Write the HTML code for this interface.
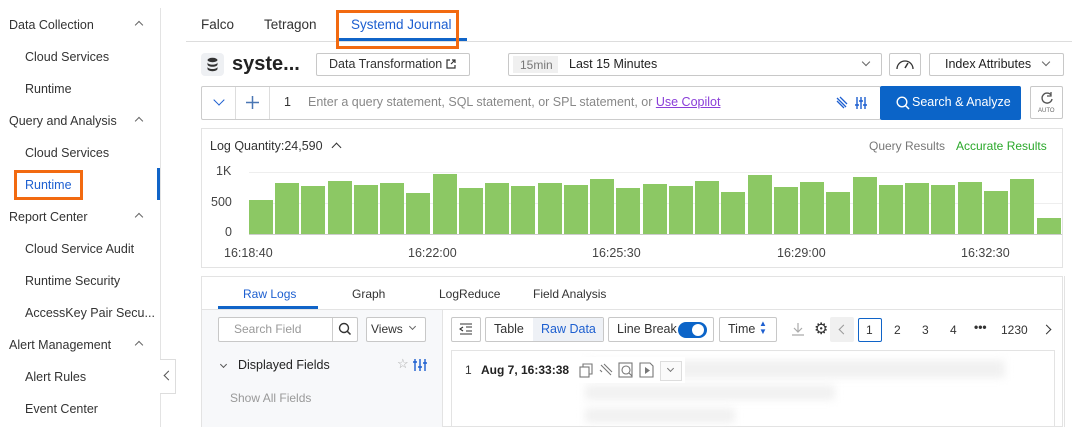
<!DOCTYPE html>
<html><head><meta charset="utf-8">
<style>
*{box-sizing:border-box;margin:0;padding:0}
body{width:1072px;height:427px;overflow:hidden;background:#fff;font-family:"Liberation Sans",sans-serif;font-size:12px;color:#333;position:relative}
.a{position:absolute;white-space:nowrap}
.h{font-size:12.5px;color:#333}
.s{font-size:12.5px;color:#333}
.btn{position:absolute;border:1px solid #c8c8c8;border-radius:2px;background:#fff}
.bar{position:absolute;background:#8cc864;width:24px}
.car{position:absolute;width:6px;height:6px;border-left:1.3px solid #666;border-top:1.3px solid #666;transform:rotate(45deg)}
.gl{position:absolute;left:249px;width:813px;height:1px;background:#eee}
.blur{position:absolute;background:#f1f1f1;filter:blur(4px);border-radius:3px}
</style></head><body>
<!-- sidebar -->
<div class="a h" style="left:9px;top:18px">Data Collection</div>
<div class="car" style="left:136px;top:22px"></div>
<div class="a s" style="left:25px;top:50px">Cloud Services</div>
<div class="a s" style="left:25px;top:82px">Runtime</div>
<div class="a h" style="left:9px;top:114px">Query and Analysis</div>
<div class="car" style="left:136px;top:118px"></div>
<div class="a s" style="left:25px;top:146px">Cloud Services</div>
<div class="a s" style="left:25px;top:178px;color:#1d5fd0">Runtime</div>
<div class="a" style="left:14px;top:170px;width:69px;height:30px;border:3px solid #f26a10"></div>
<div class="a h" style="left:9px;top:210px">Report Center</div>
<div class="car" style="left:136px;top:214px"></div>
<div class="a s" style="left:25px;top:242px">Cloud Service Audit</div>
<div class="a s" style="left:25px;top:274px">Runtime Security</div>
<div class="a s" style="left:25px;top:306px">AccessKey Pair Secu...</div>
<div class="a h" style="left:9px;top:338px">Alert Management</div>
<div class="car" style="left:136px;top:342px"></div>
<div class="a s" style="left:25px;top:370px">Alert Rules</div>
<div class="a s" style="left:25px;top:402px">Event Center</div>
<div class="a" style="left:160px;top:8px;width:1px;height:419px;background:#e3e3e3"></div>
<div class="a" style="left:157px;top:168px;width:3px;height:32px;background:#1064c8"></div>
<div class="a" style="left:160px;top:359px;width:16px;height:35px;background:#fff;border:1px solid #ddd;border-left:none"></div>
<div class="a" style="left:165px;top:372px;width:7px;height:7px;border-left:1.3px solid #555;border-bottom:1.3px solid #555;transform:rotate(45deg)"></div>

<!-- tabs -->
<div class="a" style="left:186px;top:41px;width:886px;height:1px;background:#ddd"></div>
<div class="a" style="left:201px;top:17px;font-size:13.5px">Falco</div>
<div class="a" style="left:264px;top:17px;font-size:13.5px">Tetragon</div>
<div class="a" style="left:351px;top:17px;font-size:13.5px;color:#1d5fd0">Systemd Journal</div>
<div class="a" style="left:338px;top:38px;width:129px;height:3px;background:#1064c8"></div>
<div class="a" style="left:336px;top:10px;width:123px;height:39px;border:3px solid #f26a10"></div>

<!-- row 2 -->
<div class="a" style="left:201px;top:53px;width:23px;height:23px;background:#eef0f3;border-radius:4px"></div>
<svg class="a" style="left:206px;top:57px" width="13" height="15" viewBox="0 0 13 15"><ellipse cx="6.5" cy="3" rx="5" ry="2.2" fill="#333"/><path d="M1.5 5.2c0 1.4 2.2 2.4 5 2.4s5-1 5-2.4v2.2c0 1.4-2.2 2.4-5 2.4s-5-1-5-2.4z M1.5 9.6c0 1.4 2.2 2.4 5 2.4s5-1 5-2.4v2.2c0 1.4-2.2 2.4-5 2.4s-5-1-5-2.4z" fill="#333"/></svg>
<div class="a" style="left:232px;top:53px;font-size:20px;font-weight:bold;color:#222">syste...</div>
<div class="btn" style="left:316px;top:53px;width:154px;height:23px"></div>
<div class="a" style="left:329px;top:57px;font-size:12.5px">Data Transformation</div>
<svg class="a" style="left:445px;top:58px" width="12" height="12"><path d="M5 2H2v8h8V7 M7 2h3v3 M10 2 6 6" fill="none" stroke="#333" stroke-width="1.2"/></svg>
<div class="btn" style="left:508px;top:53px;width:374px;height:23px"></div>
<div class="a" style="left:513px;top:56px;width:45px;height:17px;background:#f0f0f0"></div>
<div class="a" style="left:520px;top:58px;color:#777;font-size:12px">15min</div>
<div class="a" style="left:569px;top:57px;font-size:12.5px;color:#222">Last 15 Minutes</div>
<div class="a" style="left:863px;top:59px;width:6px;height:6px;border-right:1.2px solid #666;border-bottom:1.2px solid #666;transform:rotate(45deg)"></div>
<div class="btn" style="left:889px;top:53px;width:32px;height:23px"></div>
<svg class="a" style="left:895px;top:57px" width="20" height="14"><path d="M2 12A8 8 0 0 1 18 12" fill="none" stroke="#333" stroke-width="1.3"/><path d="M10 11 13 6" stroke="#333" stroke-width="1.5"/></svg>
<div class="btn" style="left:929px;top:53px;width:135px;height:23px"></div>
<div class="a" style="left:945px;top:57px;font-size:12.5px;color:#222">Index Attributes</div>
<div class="a" style="left:1043px;top:59px;width:6px;height:6px;border-right:1.2px solid #666;border-bottom:1.2px solid #666;transform:rotate(45deg)"></div>

<!-- query row -->
<div class="btn" style="left:201px;top:86px;width:680px;height:34px;border-color:#ccc"></div>
<div class="a" style="left:235px;top:87px;width:1px;height:32px;background:#ddd"></div>
<div class="a" style="left:269px;top:87px;width:1px;height:32px;background:#ddd"></div>
<div class="a" style="left:215px;top:96px;width:8px;height:8px;border-right:1.6px solid #1d5fd0;border-bottom:1.6px solid #1d5fd0;transform:rotate(45deg)"></div>
<svg class="a" style="left:245px;top:95px" width="15" height="15"><path d="M7.5 1v13M1 7.5h13" stroke="#4a77b4" stroke-width="1.5"/></svg>
<div class="a" style="left:284px;top:95px;color:#333;font-size:12.5px">1</div>
<div class="a" style="left:308px;top:95px;color:#888;font-size:12.5px">Enter a query statement, SQL statement, or SPL statement, or <span style="color:#8a3ed8;text-decoration:underline">Use Copilot</span></div>
<svg class="a" style="left:835px;top:96px" width="34" height="14"><path d="M2 2l9 9M5 1l7 7M2 5l7 7" stroke="#1d5fd0" stroke-width="1.3" fill="none"/><path d="M22 1v12M26 1v12M30 1v12M20 9h4M24 5h4M28 9h4" stroke="#1d5fd0" stroke-width="1.4"/></svg>
<div class="a" style="left:880px;top:86px;width:141px;height:34px;background:#0b64c8;border-radius:2px"></div>
<svg class="a" style="left:896px;top:96px" width="14" height="14"><circle cx="6" cy="6" r="4.8" fill="none" stroke="#fff" stroke-width="1.4"/><path d="M9.5 9.5 13 13" stroke="#fff" stroke-width="1.5"/></svg>
<div class="a" style="left:912px;top:95px;color:#fff;font-size:12.5px">Search &amp; Analyze</div>
<div class="btn" style="left:1030px;top:86px;width:33px;height:33px"></div>
<svg class="a" style="left:1040px;top:91px" width="14" height="14"><path d="M11 4A5 5 0 1 0 12 8" fill="none" stroke="#555" stroke-width="1.4"/><path d="M11 1v4H7" fill="none" stroke="#555" stroke-width="1.3"/></svg>
<div class="a" style="left:1038px;top:108px;font-size:6px;color:#666">AUTO</div>

<!-- chart panel -->
<div class="a" style="left:201px;top:128px;width:862px;height:140px;border:1px solid #e3e3e3"></div>
<div class="a" style="left:210px;top:139px;font-size:12.5px;color:#333">Log Quantity:24,590</div>
<div class="a" style="left:333px;top:144px;width:7px;height:7px;border-left:1.4px solid #333;border-top:1.4px solid #333;transform:rotate(45deg)"></div>
<div class="a" style="left:869px;top:139px;color:#777;font-size:12px">Query Results</div>
<div class="a" style="left:956px;top:139px;color:#2aa82a;font-size:12px">Accurate Results</div>
<div class="a" style="left:216px;top:164px;color:#444;font-size:12.5px">1K</div>
<div class="a" style="left:211px;top:195px;color:#444;font-size:12.5px">500</div>
<div class="a" style="left:225px;top:225px;color:#444;font-size:12.5px">0</div>
<div class="gl" style="top:172px"></div>
<div class="gl" style="top:203px"></div>
<div class="gl" style="top:234px;background:#ccc"></div>
<div class="bar" style="left:249px;top:200px;height:34px"></div>
<div class="bar" style="left:275px;top:183px;height:51px"></div>
<div class="bar" style="left:301px;top:186px;height:48px"></div>
<div class="bar" style="left:328px;top:181px;height:53px"></div>
<div class="bar" style="left:354px;top:185px;height:49px"></div>
<div class="bar" style="left:380px;top:183px;height:51px"></div>
<div class="bar" style="left:406px;top:193px;height:41px"></div>
<div class="bar" style="left:433px;top:174px;height:60px"></div>
<div class="bar" style="left:459px;top:188px;height:46px"></div>
<div class="bar" style="left:485px;top:183px;height:51px"></div>
<div class="bar" style="left:511px;top:186px;height:48px"></div>
<div class="bar" style="left:538px;top:183px;height:51px"></div>
<div class="bar" style="left:564px;top:185px;height:49px"></div>
<div class="bar" style="left:590px;top:179px;height:55px"></div>
<div class="bar" style="left:616px;top:188px;height:46px"></div>
<div class="bar" style="left:643px;top:184px;height:50px"></div>
<div class="bar" style="left:669px;top:186px;height:48px"></div>
<div class="bar" style="left:695px;top:181px;height:53px"></div>
<div class="bar" style="left:721px;top:192px;height:42px"></div>
<div class="bar" style="left:748px;top:175px;height:59px"></div>
<div class="bar" style="left:774px;top:187px;height:47px"></div>
<div class="bar" style="left:800px;top:182px;height:52px"></div>
<div class="bar" style="left:826px;top:192px;height:42px"></div>
<div class="bar" style="left:853px;top:177px;height:57px"></div>
<div class="bar" style="left:879px;top:185px;height:49px"></div>
<div class="bar" style="left:905px;top:183px;height:51px"></div>
<div class="bar" style="left:931px;top:185px;height:49px"></div>
<div class="bar" style="left:958px;top:182px;height:52px"></div>
<div class="bar" style="left:984px;top:191px;height:43px"></div>
<div class="bar" style="left:1010px;top:179px;height:55px"></div>
<div class="bar" style="left:1037px;top:218px;height:16px"></div>
<div class="a" style="left:224px;top:246px;color:#444;font-size:12.5px">16:18:40</div>
<div class="a" style="left:408px;top:246px;color:#444;font-size:12.5px">16:22:00</div>
<div class="a" style="left:592px;top:246px;color:#444;font-size:12.5px">16:25:30</div>
<div class="a" style="left:777px;top:246px;color:#444;font-size:12.5px">16:29:00</div>
<div class="a" style="left:961px;top:246px;color:#444;font-size:12.5px">16:32:30</div>

<!-- lower panel -->
<div class="a" style="left:201px;top:276px;width:862px;height:151px;border:1px solid #e3e3e3"></div>
<div class="a" style="left:202px;top:309px;width:240px;height:118px;background:#f7f8fa"></div>
<div class="a" style="left:202px;top:309px;width:860px;height:1px;background:#e3e3e3"></div>
<div class="a" style="left:442px;top:309px;width:1px;height:118px;background:#e3e3e3"></div>
<div class="a" style="left:243px;top:287px;color:#1d5fd0;font-size:12px">Raw Logs</div>
<div class="a" style="left:218px;top:306px;width:100px;height:3px;background:#1064c8"></div>
<div class="a" style="left:352px;top:287px;color:#333;font-size:12px">Graph</div>
<div class="a" style="left:439px;top:287px;color:#333;font-size:12px">LogReduce</div>
<div class="a" style="left:533px;top:287px;color:#333;font-size:12px">Field Analysis</div>
<div class="btn" style="left:218px;top:317px;width:140px;height:25px"></div>
<div class="a" style="left:332px;top:318px;width:1px;height:23px;background:#ccc"></div>
<div class="a" style="left:234px;top:322px;color:#999;font-size:12px">Search Field</div>
<svg class="a" style="left:338px;top:322px" width="14" height="14"><circle cx="6" cy="6" r="4.5" fill="none" stroke="#333" stroke-width="1.4"/><path d="M9.3 9.3 12.5 12.5" stroke="#333" stroke-width="1.5"/></svg>
<div class="btn" style="left:366px;top:317px;width:60px;height:25px"></div>
<div class="a" style="left:371px;top:322px;color:#333;font-size:12px">Views</div>
<div class="a" style="left:410px;top:324px;width:5px;height:5px;border-right:1.1px solid #666;border-bottom:1.1px solid #666;transform:rotate(45deg)"></div>
<div class="a" style="left:221px;top:362px;width:5px;height:5px;border-right:1.1px solid #555;border-bottom:1.1px solid #555;transform:rotate(45deg)"></div>
<div class="a" style="left:238px;top:358px;color:#222;font-size:12.5px">Displayed Fields</div>
<div class="a" style="left:397px;top:356px;color:#aaa;font-size:13px">☆</div>
<svg class="a" style="left:413px;top:358px" width="14" height="13"><path d="M2 1v12M7 1v12M12 1v12M0 4h4M5 9h4M10 5h4" stroke="#1d5fd0" stroke-width="1.4"/></svg>
<div class="a" style="left:230px;top:391px;color:#999;font-size:12px">Show All Fields</div>

<div class="btn" style="left:451px;top:317px;width:30px;height:25px"></div>
<svg class="a" style="left:459px;top:323px" width="14" height="12"><path d="M1 1h12M7 4h6M7 8h6M1 11h12M4 4 1 6l3 2" stroke="#333" stroke-width="1.1" fill="none"/></svg>
<div class="btn" style="left:485px;top:317px;width:119px;height:25px"></div>
<div class="a" style="left:533px;top:318px;width:70px;height:23px;background:#eef1f6"></div>
<div class="a" style="left:494px;top:322px;font-size:12.5px;color:#333">Table</div>
<div class="a" style="left:541px;top:322px;font-size:12.5px;color:#1d5fd0">Raw Data</div>
<div class="btn" style="left:608px;top:317px;width:106px;height:25px"></div>
<div class="a" style="left:617px;top:322px;font-size:12.5px;color:#333">Line Break</div>
<div class="a" style="left:678px;top:322px;width:29px;height:16px;border-radius:8px;background:#0b64c8"></div>
<div class="a" style="left:692px;top:324px;width:12px;height:12px;border-radius:6px;background:#fff"></div>
<div class="btn" style="left:719px;top:317px;width:58px;height:25px"></div>
<div class="a" style="left:728px;top:322px;font-size:12.5px;color:#333">Time</div>
<div class="a" style="left:759px;top:320px;font-size:8px;color:#1d5fd0;line-height:8px">▲<br>▼</div>
<svg class="a" style="left:791px;top:322px" width="14" height="14"><path d="M7 1v9M3 6l4 4 4-4M1 13h12" stroke="#aaa" stroke-width="1.2" fill="none"/></svg>
<div class="a" style="left:814px;top:319px;font-size:16px;color:#333">⚙</div>
<div class="a" style="left:830px;top:317px;width:24px;height:25px;background:#f0f0f0;border-radius:2px"></div>
<div class="a" style="left:840px;top:326px;width:7px;height:7px;border-left:1.2px solid #999;border-bottom:1.2px solid #999;transform:rotate(45deg)"></div>
<div class="a" style="left:858px;top:318px;width:24px;height:24px;border:1px solid #1064c8;border-radius:2px"></div>
<div class="a" style="left:866px;top:323px;font-size:12px;color:#333">1</div>
<div class="a" style="left:894px;top:323px;font-size:12px;color:#333">2</div>
<div class="a" style="left:922px;top:323px;font-size:12px;color:#333">3</div>
<div class="a" style="left:950px;top:323px;font-size:12px;color:#333">4</div>
<div class="a" style="left:974px;top:320px;font-size:12px;color:#333;font-weight:bold">•••</div>
<div class="a" style="left:1001px;top:323px;font-size:12px;color:#333">1230</div>
<div class="a" style="left:1043px;top:326px;width:7px;height:7px;border-right:1.3px solid #333;border-top:1.3px solid #333;transform:rotate(45deg)"></div>

<div class="a" style="left:451px;top:350px;width:604px;height:77px;border:1px solid #e3e3e3;border-bottom:none"></div>
<div class="blur" style="left:585px;top:360px;width:420px;height:18px"></div>
<div class="blur" style="left:585px;top:385px;width:250px;height:15px"></div>
<div class="blur" style="left:585px;top:408px;width:150px;height:15px"></div>
<div class="a" style="left:465px;top:363px;font-size:12px;color:#333">1</div>
<div class="a" style="left:481px;top:363px;font-size:12px;color:#222;font-weight:bold">Aug 7, 16:33:38</div>
<div class="a" style="left:576px;top:357px;width:109px;height:26px;background:#fff"></div>
<svg class="a" style="left:579px;top:362px" width="90" height="16"><g fill="none" stroke="#777" stroke-width="1.1"><rect x="1" y="5" width="9" height="10"/><path d="M4 5V2h9v10h-3"/><path d="M22 3l10 10M25 2l8 8M21 8l2 2"/><rect x="40" y="1" width="13" height="14"/><circle cx="47" cy="8" r="4"/><path d="M50 11l3 3"/><path d="M61 1h10l3 3v11H61z"/></g><path d="M66 5v7l5-3.5z" fill="#777"/></svg>
<div class="a" style="left:660px;top:361px;width:22px;height:20px;border:1px solid #ddd;background:#fafafa"></div>
<div class="a" style="left:668px;top:366px;width:5px;height:5px;border-right:1.1px solid #777;border-bottom:1.1px solid #777;transform:rotate(45deg)"></div>
<div class="a" style="left:1064px;top:276px;width:1px;height:151px;background:#e3e3e3"></div>
</body></html>
